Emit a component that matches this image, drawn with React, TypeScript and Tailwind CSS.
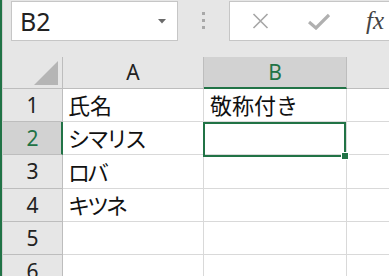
import React from "react";

const F = "font-['Noto_Sans','Noto_Sans_CJK_JP',sans-serif]";

const rows: { n: number; a: string; b: string; h: string; ka: boolean }[] = [
  { n: 1, a: "氏名", b: "敬称付き", h: "h-[33px]", ka: false },
  { n: 2, a: "シマリス", b: "", h: "h-[33px]", ka: true },
  { n: 3, a: "ロバ", b: "", h: "h-[34px]", ka: true },
  { n: 4, a: "キツネ", b: "", h: "h-[33px]", ka: true },
  { n: 5, a: "", b: "", h: "h-[33px]", ka: false },
  { n: 6, a: "", b: "", h: "h-[33px]", ka: false },
];

export default function App() {
  return (
    <div className={`w-[389px] h-[276px] overflow-hidden bg-[#e6e6e6] flex ${F}`}>
      <div className="w-[3px] shrink-0 flex">
        <div className="w-[2px] bg-[#217346]" />
        <div className="w-[1px] bg-[#d0d0d0]" />
      </div>
      <div className="flex-1 flex flex-col min-w-0">
        {/* toolbar */}
        <div className="h-[41px] flex items-start pt-[1px] shrink-0">
          <div className="ml-[8px] w-[167px] h-[40px] bg-white border border-[#c6c6c6] flex items-center justify-between pl-[8px] pr-[11px] shrink-0">
            <span className="text-[25px] leading-none text-[#222] mt-[1px]">B2</span>
            <svg width="8" height="5" viewBox="0 0 8 5">
              <path d="M0 0 L8 0 L4 4.5 Z" fill="#6a6a6a" />
            </svg>
          </div>
          <div className="ml-[24px] w-[3px] flex flex-col gap-[4px] mt-[11px] shrink-0">
            <div className="w-[3px] h-[3px] bg-[#a8a8a8]" />
            <div className="w-[3px] h-[3px] bg-[#a8a8a8]" />
            <div className="w-[3px] h-[3px] bg-[#a8a8a8]" />
          </div>
          <div className="ml-[24px] flex-1 h-[40px] bg-white border border-r-0 border-[#c6c6c6] flex items-center">
            <svg className="ml-[22px]" width="17" height="16" viewBox="0 0 17 16">
              <path d="M1.5 1 L15.5 15 M15.5 1 L1.5 15" stroke="#a6a6a6" strokeWidth="1.6" fill="none" />
            </svg>
            <svg className="ml-[39px]" width="22" height="17" viewBox="0 0 22 17">
              <path d="M1 9 L8 15 L21 2" stroke="#b0b0b0" strokeWidth="3.2" fill="none" />
            </svg>
            <span className="ml-[36px] font-['Liberation_Serif',serif] italic text-[25px] leading-none text-[#444] -mt-[2px]">
              fx
            </span>
          </div>
        </div>
        <div className="h-[16px] shrink-0" />
        {/* grid */}
        <div className="relative flex-1">
          <div className="flex h-[32px]">
            <div className="w-[60px] shrink-0 border-r border-b border-[#bdbdbd] flex items-end justify-end pr-[4px] pb-[3px]">
              <svg width="24" height="24" viewBox="0 0 24 24">
                <path d="M24 0 L24 24 L0 24 Z" fill="#b5b5b5" />
              </svg>
            </div>
            <div className="w-[141px] shrink-0 border-r border-b border-[#bdbdbd] flex items-center justify-center text-[21px] text-[#222] leading-none">
              A
            </div>
            <div className="w-[143px] shrink-0 bg-[#d2d2d2] border-r border-[#bdbdbd] border-b-2 border-b-[#217346] flex items-center justify-center text-[21px] text-[#217346] leading-none">
              B
            </div>
            <div className="flex-1 border-b border-[#bdbdbd]" />
          </div>
          {rows.map((r) => {
            const sel = r.n === 2;
            return (
              <div key={r.n} className={`flex ${r.h}`}>
                <div
                  className={`w-[60px] shrink-0 border-b border-[#bdbdbd] flex items-center justify-center text-[21px] leading-none ${
                    sel
                      ? "bg-[#d2d2d2] border-r-2 border-r-[#217346] text-[#217346] pl-[1px]"
                      : "border-r text-[#222]"
                  }`}
                >
                  {r.n}
                </div>
                <div
                  className={`w-[141px] shrink-0 bg-white border-r border-b border-[#d9d9d9] flex items-end pl-[5px] pb-[3px] text-[22px] leading-[26px] text-[#111] ${
                    r.ka ? "tracking-[-3px]" : ""
                  }`}
                >
                  {r.a}
                </div>
                <div className="w-[143px] shrink-0 bg-white border-r border-b border-[#d9d9d9] flex items-end pl-[6px] pb-[3px] text-[22px] leading-[26px] text-[#111]">
                  {r.b}
                </div>
                <div className="flex-1 bg-white border-b border-[#d9d9d9]" />
              </div>
            );
          })}
          {/* selection */}
          <div className="absolute left-[200px] top-[65px] w-[143px] h-[35px] border-2 border-[#217346]" />
          <div className="absolute left-[338px] top-[95px] w-[8px] h-[8px] bg-[#217346] border border-white" />
        </div>
      </div>
    </div>
  );
}
